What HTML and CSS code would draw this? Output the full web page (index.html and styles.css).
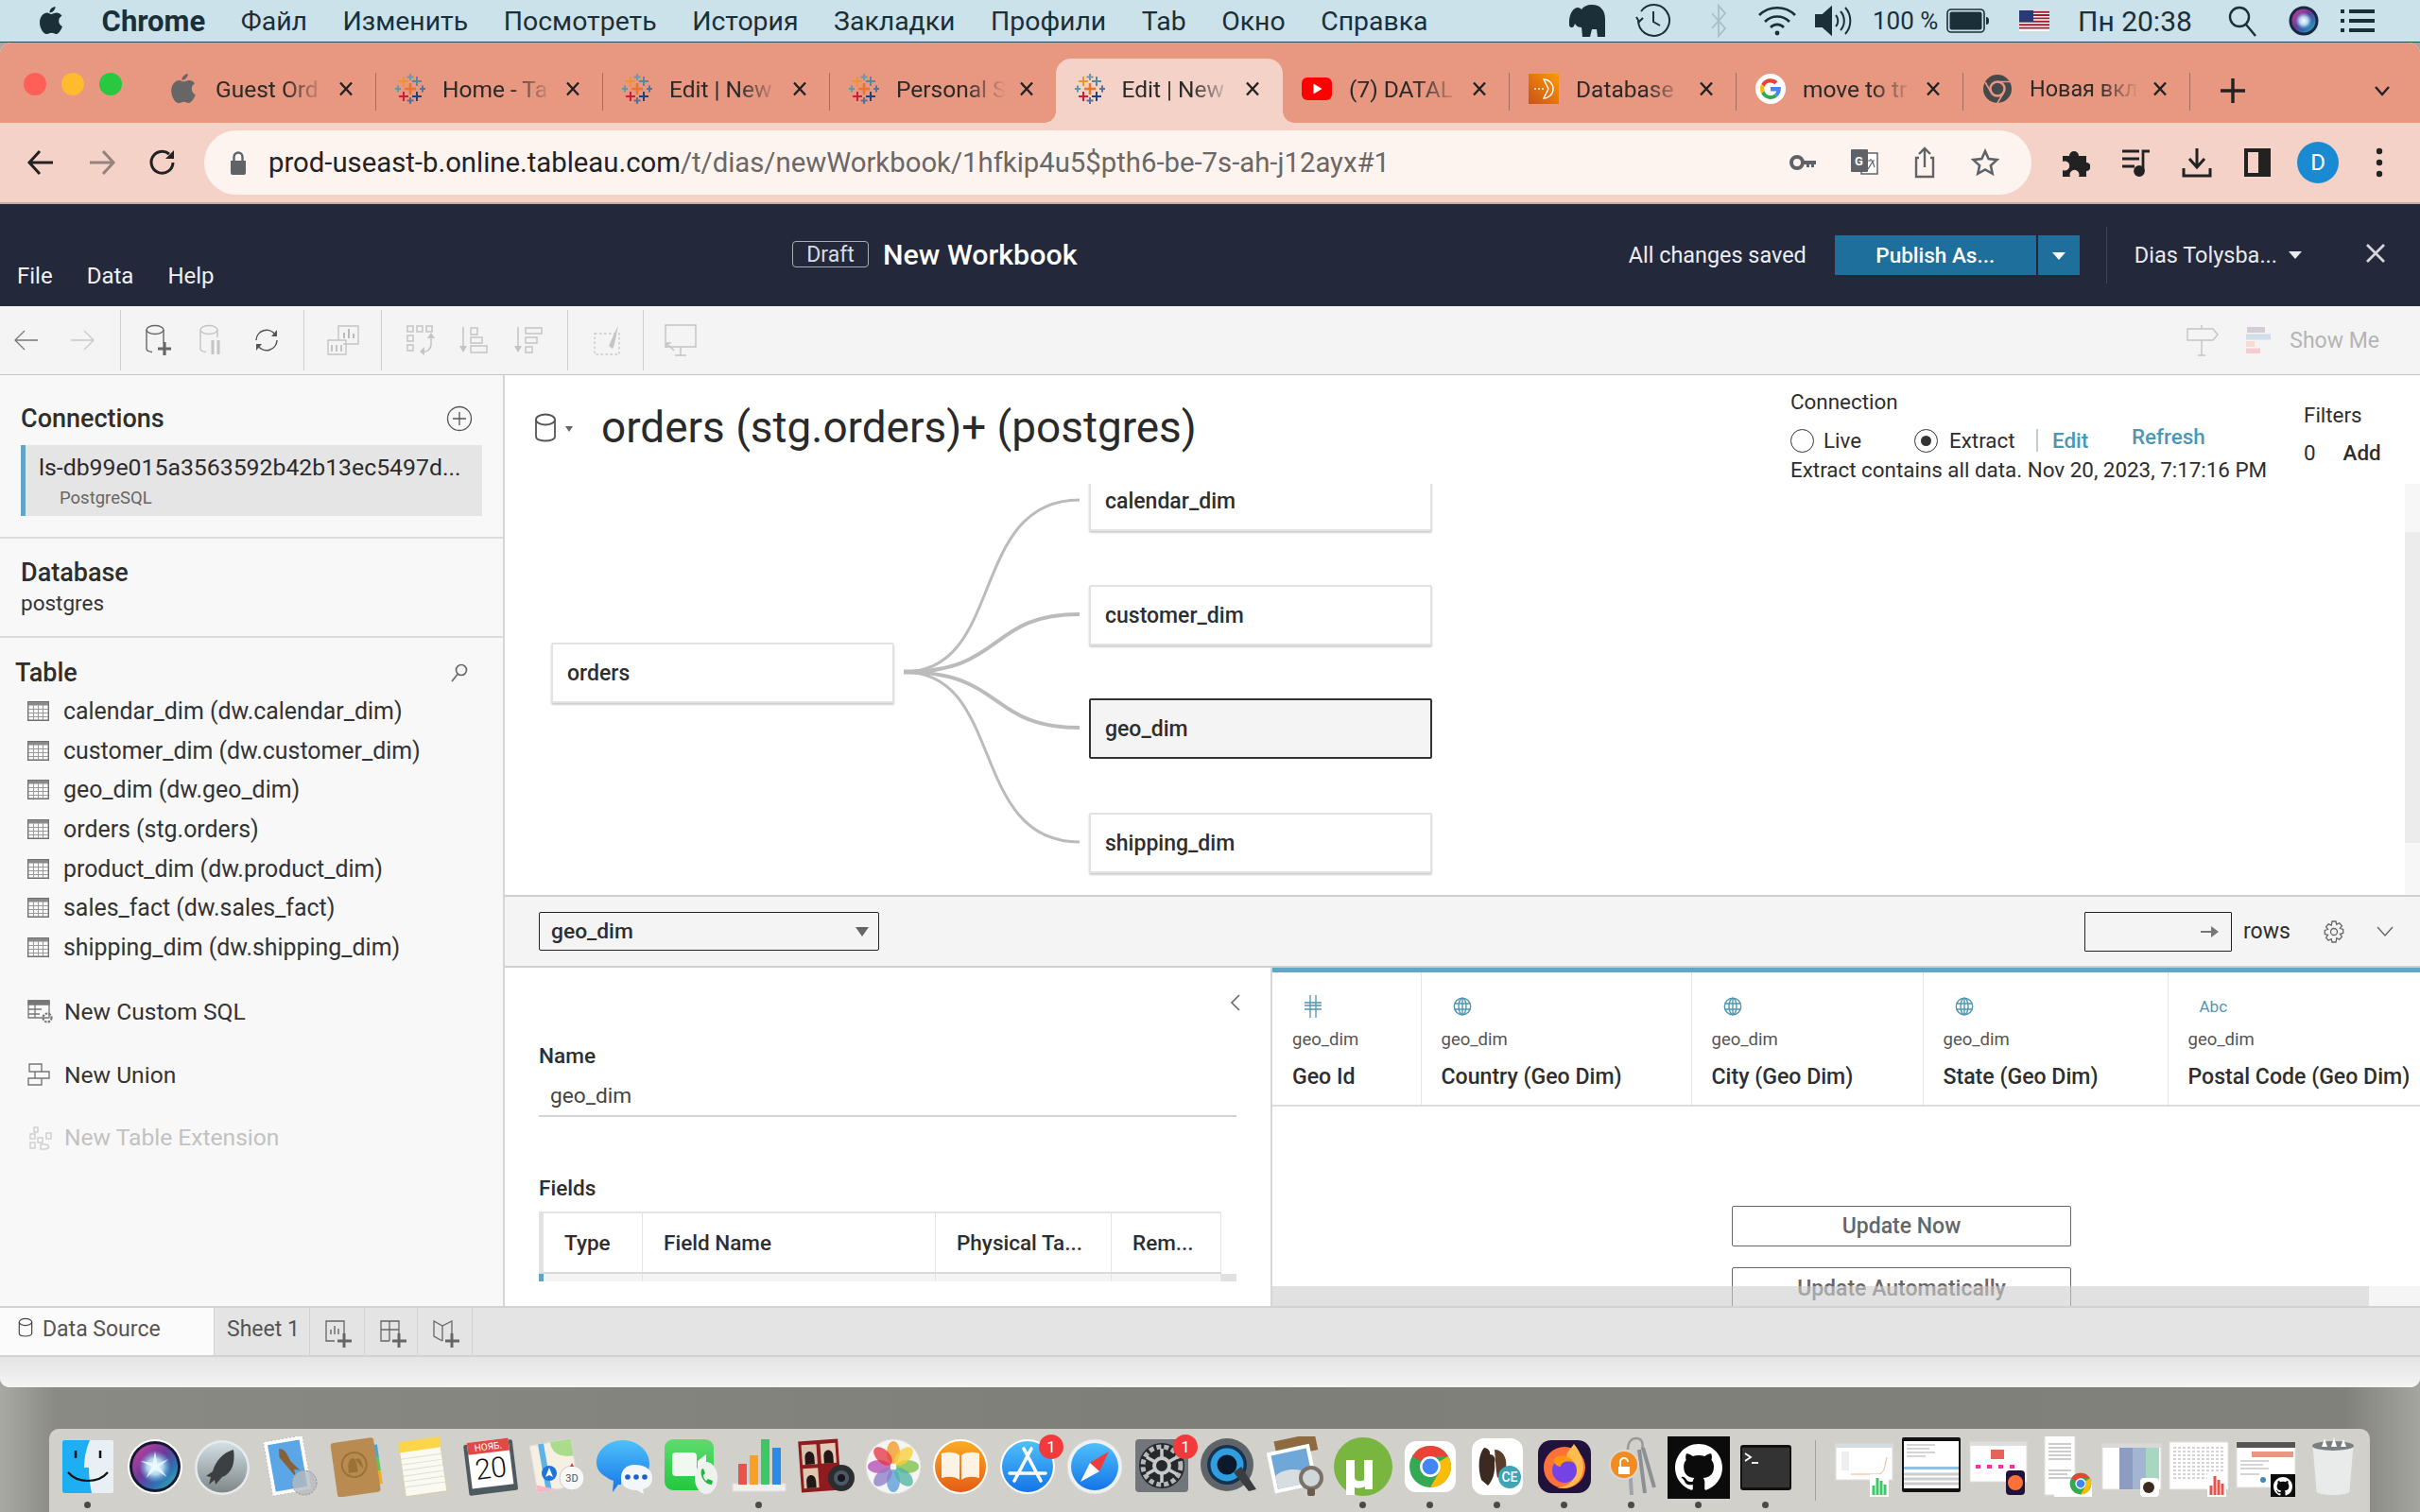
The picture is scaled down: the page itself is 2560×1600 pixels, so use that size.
FILE: index.html
```html
<!DOCTYPE html>
<html lang="ru">
<head>
<meta charset="utf-8">
<title>Tableau – New Workbook</title>
<link rel="stylesheet" href="styles.css">
</head>
<body>
<svg class="defs" width="0" height="0">
  <defs>
    <symbol id="tb" viewBox="0 0 32 32">
      <g fill="none" stroke-width="2">
        <path d="M16 10v12M10 16h12" stroke="#e8762d" stroke-width="2.6"/>
        <path d="M9 3v10M4 8h10" stroke="#e8962d"/>
        <path d="M23 3v10M18 8h10" stroke="#5b879b"/>
        <path d="M16 0v7M12.500 3.500h7" stroke="#7099a6"/>
        <path d="M3 12.500v7M0 16h6" stroke="#5b9aa8"/>
        <path d="M29 12.500v7M26 16h6" stroke="#5b6f9b"/>
        <path d="M9 19v10M4 24h10" stroke="#c72037"/>
        <path d="M23 19v10M18 24h10" stroke="#1f447b"/>
        <path d="M16 25v7M12.500 28.500h7" stroke="#5b6f9b"/>
      </g>
    </symbol>
    <symbol id="tx" viewBox="0 0 16 16">
      <path d="M2 1.500l12 13M14 1.500l-12 13" fill="none" stroke="#222" stroke-width="2.400"/>
    </symbol>
    <symbol id="apple" viewBox="0 0 24 30">
      <path d="M16.500 0c.3 3.200-2.900 6.600-6 6.300C10.200 3.200 13.400.3 16.500 0zM12 8c1.500 0 3.300-1.500 5.800-1.500 2 0 4.300 1.100 5.600 3.200-4.700 2.700-3.900 9.300 .6 11.200-1.300 3.300-3.900 8.100-6.700 8.100-1.900 0-2.600-1.200-4.700-1.200-2.200 0-3 1.200-4.700 1.200C4.500 29.900 0 23 0 17 0 10.300 4.300 6.500 7.800 6.500c1.900 0 3.200 1.500 4.200 1.500z"/>
    </symbol>
    <symbol id="grid" viewBox="0 0 23 21">
      <path d="M.7.7h21.600v19.600H.7z" fill="none" stroke="#707070" stroke-width="1.400"/>
      <path d="M1 1h21v3.500H1z" fill="#8a8a8a"/>
      <path d="M1 8.500h21M1 12.500h21M1 16.500h21M6.500 4v16M11.500 4v16M16.500 4v16" stroke="#9a9a9a" stroke-width="1"/>
    </symbol>
    <symbol id="globe" viewBox="0 0 20 20">
      <g fill="none" stroke="#4f96b0" stroke-width="1.400">
        <circle cx="10" cy="10" r="8.700"/>
        <ellipse cx="10" cy="10" rx="4" ry="8.700"/>
        <path d="M10 1v18M1.500 7h17M1.500 13h17"/>
      </g>
    </symbol>
    <symbol id="cyl" viewBox="0 0 24 32">
      <g fill="none" stroke="currentColor" stroke-width="1.800">
        <path d="M2 7v18c0 6 20 6 20 0V7"/>
        <ellipse cx="12" cy="7" rx="10" ry="5.500"/>
      </g>
    </symbol>
    <symbol id="gchrome" viewBox="0 0 64 64">
      <circle cx="32" cy="32" r="26" fill="#34a853"/>
      <path d="M32 6a26 26 0 0 1 22.500 13H32a13 13 0 0 0-11.300 6.500L9.500 19A26 26 0 0 1 32 6z" fill="#ea4335"/>
      <path d="M54.500 19A26 26 0 0 1 32 58l11.300-19.500A13 13 0 0 0 43.300 25.500z" fill="#fbbc05"/>
      <circle cx="32" cy="32" r="13" fill="#fff"/>
      <circle cx="32" cy="32" r="10" fill="#4285f4"/>
    </symbol>
    <symbol id="gh" viewBox="0 0 16 16">
      <path fill="#fff" d="M8 0C3.580 0 0 3.580 0 8c0 3.540 2.290 6.530 5.470 7.590.4.070.55-.17.55-.38 0-.19-.01-.82-.01-1.490-2.010.37-2.530-.49-2.690-.94-.09-.23-.48-.94-.82-1.130-.28-.15-.68-.52-.01-.53.630-.01 1.080.58 1.230.82.720 1.210 1.870.87 2.330.66.070-.52.280-.87.510-1.070-1.780-.2-3.640-.89-3.640-3.950 0-.87.310-1.590.820-2.150-.08-.2-.36-1.020.08-2.120 0 0 .67-.21 2.200.82.640-.18 1.320-.27 2-.27s1.360.09 2 .27c1.530-1.040 2.200-.82 2.200-.82.440 1.100.16 1.920.08 2.120.51.560.82 1.270.82 2.150 0 3.070-1.870 3.750-3.650 3.950.29.250.54.730.54 1.480 0 1.070-.01 1.930-.01 2.200 0 .21.150.46.550.38A8 8 0 0 0 16 8c0-4.420-3.580-8-8-8z"/>
    </symbol>
    <linearGradient id="siriG" x1="0" y1="0" x2="1" y2="1">
      <stop offset="0" stop-color="#d0409f"/><stop offset=".45" stop-color="#6a3a9a"/><stop offset=".7" stop-color="#2f6fb0"/><stop offset="1" stop-color="#38c0b8"/>
    </linearGradient>
    <radialGradient id="siriS">
      <stop offset="0" stop-color="#fff"/><stop offset=".5" stop-color="#bfeefa" stop-opacity=".85"/><stop offset="1" stop-color="#6fc9ec" stop-opacity="0"/>
    </radialGradient>
    <linearGradient id="greenG" x1="0" y1="0" x2="0" y2="1">
      <stop offset="0" stop-color="#5ddc6f"/><stop offset="1" stop-color="#23c83d"/>
    </linearGradient>
    <linearGradient id="blueG" x1="0" y1="0" x2="0" y2="1">
      <stop offset="0" stop-color="#4fc0fb"/><stop offset="1" stop-color="#1475e8"/>
    </linearGradient>
    <linearGradient id="orG" x1="0" y1="0" x2="0" y2="1">
      <stop offset="0" stop-color="#fbab25"/><stop offset="1" stop-color="#e55c14"/>
    </linearGradient>
    <linearGradient id="rkG" x1="0" y1="0" x2="0" y2="1">
      <stop offset="0" stop-color="#d2dfe4"/><stop offset="1" stop-color="#7f8688"/>
    </linearGradient>
    <linearGradient id="awsG" x1="0" y1="1" x2="1" y2="0">
      <stop offset="0" stop-color="#c8511b"/><stop offset="1" stop-color="#f90"/>
    </linearGradient>
  </defs>
</svg>

<header class="menubar">
  <div class="mb-left">
    <svg class="mb-apple" width="24" height="30"><use href="#apple"/></svg>
    <span class="mb-app">Chrome</span>
    <span>Файл</span><span>Изменить</span><span>Посмотреть</span><span>История</span><span>Закладки</span><span>Профили</span><span>Tab</span><span>Окно</span><span>Справка</span>
  </div>
  <div class="mb-right">
    <svg class="st st-el" width="40" height="36" viewBox="0 0 40 36"><path fill="#1a2f38" d="M0 17C1 9 5 4 9 4c2 0 3 1 4 2 2-3 6-5 11-5 9 0 14 6 14 15v19h-8l-1-8h-5l-2 8h-8l-1-10c-3 0-5-1-7-4-1 3-2 4-3 4-3 0-4-3-4-8z"/></svg>
    <svg class="st st-clock" width="38" height="38" viewBox="0 0 38 38" fill="none" stroke="#1a2f38" stroke-width="2"><path d="M6 9a16.500 16.500 0 1 1-3 10"/><path d="M1 15l3 5 4-4" stroke-width="2"/><path d="M19 9v11l7 4"/></svg>
    <svg class="st st-bt" width="18" height="36" viewBox="0 0 18 36" fill="none" stroke="#a9bec6" stroke-width="1.800"><path d="M2 10l14 16-7 8V2l7 8L2 26"/></svg>
    <svg class="st st-wifi" width="42" height="34" viewBox="0 0 42 34" fill="none" stroke="#1a2f38" stroke-width="2.600"><path d="M2 11a27 27 0 0 1 38 0M8 18a18 18 0 0 1 26 0M14 24a9.500 9.500 0 0 1 14 0"/><circle cx="21" cy="30" r="2.400" fill="#1a2f38" stroke="none"/></svg>
    <svg class="st st-vol" width="42" height="34" viewBox="0 0 42 34" fill="none" stroke="#1a2f38" stroke-width="2"><path d="M1 11h7l9-8v28l-9-8H1z" fill="#1a2f38"/><path d="M22 11a9 9 0 0 1 0 12M27 7a15 15 0 0 1 0 20M32 3a21 21 0 0 1 0 28"/></svg>
    <span class="st-pct">100 %</span>
    <svg class="st st-bat" width="46" height="26" viewBox="0 0 46 26"><rect x="1" y="1" width="39" height="24" rx="4" fill="none" stroke="#1a2f38" stroke-width="1.600"/><rect x="3.500" y="3.500" width="34" height="19" rx="2" fill="#1a2f38"/><path d="M42 9c2 0 3 1 3 4s-1 4-3 4z" fill="#1a2f38"/></svg>
    <svg class="st st-flag" width="32" height="22" viewBox="0 0 32 22"><rect width="32" height="22" fill="#fff"/><path d="M0 1.700h32M0 5h32M0 8.400h32M0 11.800h32M0 15.200h32M0 18.600h32" stroke="#a3182e" stroke-width="1.900"/><rect width="15" height="12" fill="#2b3a74"/></svg>
    <span class="st-time">Пн 20:38</span>
    <svg class="st st-search" width="32" height="34" viewBox="0 0 32 34" fill="none" stroke="#1a2f38" stroke-width="2.400"><circle cx="13" cy="13" r="10"/><path d="M20 21l10 12"/></svg>
    <svg class="st st-siri" width="32" height="32" viewBox="0 0 32 32"><circle cx="16" cy="16" r="15.500" fill="#1b2740"/><circle cx="16" cy="16" r="12.500" fill="url(#siriG)"/><circle cx="16" cy="16" r="9" fill="url(#siriS)"/></svg>
    <svg class="st st-list" width="36" height="26" viewBox="0 0 36 26" fill="#1a2f38"><path d="M0 1h4v4H0zM9 1h27v4H9zM0 11h4v4H0zM9 11h27v4H9zM0 21h4v4H0zM9 21h27v4H9z"/></svg>
  </div>
</header>

<main class="window">
  <div class="tabstrip">
    <div class="lights"><i class="l-r"></i><i class="l-y"></i><i class="l-g"></i></div>
    <div class="tab">
      <svg class="fav fav-gray" width="32" height="32"><use href="#apple"/></svg>
      <span class="t-title">Guest Ord</span><svg class="t-x" width="16" height="16"><use href="#tx"/></svg>
    </div><i class="t-sep"></i>
    <div class="tab">
      <svg class="fav" width="32" height="32"><use href="#tb"/></svg>
      <span class="t-title">Home - Ta</span><svg class="t-x" width="16" height="16"><use href="#tx"/></svg>
    </div><i class="t-sep"></i>
    <div class="tab">
      <svg class="fav" width="32" height="32"><use href="#tb"/></svg>
      <span class="t-title">Edit | New</span><svg class="t-x" width="16" height="16"><use href="#tx"/></svg>
    </div><i class="t-sep"></i>
    <div class="tab tab-pre">
      <svg class="fav" width="32" height="32"><use href="#tb"/></svg>
      <span class="t-title">Personal S</span><svg class="t-x" width="16" height="16"><use href="#tx"/></svg>
    </div>
    <div class="tab tab-active">
      <svg class="fav" width="32" height="32"><use href="#tb"/></svg>
      <span class="t-title">Edit | New</span><svg class="t-x" width="16" height="16"><use href="#tx"/></svg>
    </div>
    <div class="tab">
      <svg class="fav" width="32" height="32" viewBox="0 0 32 32"><rect y="4" width="32" height="24" rx="6" fill="#f00"/><path d="M12.500 10.500v11l9-5.500z" fill="#fff"/></svg>
      <span class="t-title">(7) DATAL</span><svg class="t-x" width="16" height="16"><use href="#tx"/></svg>
    </div><i class="t-sep"></i>
    <div class="tab">
      <svg class="fav" width="32" height="32" viewBox="0 0 32 32"><rect width="32" height="32" fill="url(#awsG)"/><g fill="none" stroke="#fff" stroke-width="1.400"><path d="M16 6a10 10 0 0 1 0 20l5-10z"/><path d="M6 16h10" stroke-dasharray="2 2"/></g></svg>
      <span class="t-title">Database</span><svg class="t-x" width="16" height="16"><use href="#tx"/></svg>
    </div><i class="t-sep"></i>
    <div class="tab">
      <svg class="fav" width="32" height="32" viewBox="0 0 32 32"><circle cx="16" cy="16" r="16" fill="#fff"/><path d="M16 9.500a6.500 6.500 0 0 1 4.400 1.700l3-3A11 11 0 0 0 6.200 11l3.400 2.700A6.500 6.500 0 0 1 16 9.500z" fill="#ea4335"/><path d="M6.200 11a11 11 0 0 0 0 10l3.400-2.700a6.500 6.500 0 0 1 0-4.600z" fill="#fbbc05"/><path d="M6.200 21A11 11 0 0 0 23.400 24l-3.200-2.500a6.500 6.500 0 0 1-10.600-3.200z" fill="#34a853"/><path d="M27 14H16v4.500h6.300a5.500 5.500 0 0 1-2.100 3L23.400 24C25.700 22 27 18.500 27 14z" fill="#4285f4"/></svg>
      <span class="t-title">move to tr</span><svg class="t-x" width="16" height="16"><use href="#tx"/></svg>
    </div><i class="t-sep"></i>
    <div class="tab">
      <svg class="fav" width="32" height="32" viewBox="0 0 32 32"><circle cx="16" cy="16" r="15" fill="#45494c"/><circle cx="16" cy="16" r="7.500" fill="#45494c" stroke="#e89780" stroke-width="2.500"/><path d="M16 8.500h13M9.500 20L3 9M22.500 20L16 31" stroke="#e89780" stroke-width="1.600"/></svg>
      <span class="t-title t-ru">Новая вкл</span><svg class="t-x" width="16" height="16"><use href="#tx"/></svg>
    </div><i class="t-sep"></i>
    <svg class="t-plus" width="26" height="28" viewBox="0 0 26 28" fill="none" stroke="#222" stroke-width="3.400"><path d="M13 1v26M0 14h26"/></svg>
    <svg class="t-more" width="18" height="12" viewBox="0 0 18 12" fill="none" stroke="#222" stroke-width="2.400"><path d="M2 2l7 8 7-8"/></svg>
  </div>

  <div class="chromebar">
    <svg class="cb-nav" width="30" height="30" viewBox="0 0 30 30" fill="none" stroke="#222" stroke-width="3"><path d="M28 15H3M14 3L3 15l11 12"/></svg>
    <svg class="cb-nav cb-fwd" width="30" height="30" viewBox="0 0 30 30" fill="none" stroke="#96827d" stroke-width="3"><path d="M2 15h25M16 3l11 12-11 12"/></svg>
    <svg class="cb-nav cb-rel" width="30" height="30" viewBox="0 0 30 30" fill="none" stroke="#222" stroke-width="3"><path d="M26 15a11.500 11.500 0 1 1-4-9"/><path d="M27 2v9h-9z" fill="#222" stroke="none"/></svg>
    <div class="omnibox">
      <svg class="ob-lock" width="18" height="26" viewBox="0 0 18 26"><path d="M1 11h16v13a2 2 0 0 1-2 2H3a2 2 0 0 1-2-2z" fill="#5f6368"/><path d="M4.500 11V7a4.500 4.500 0 0 1 9 0v4" fill="none" stroke="#5f6368" stroke-width="2.400"/></svg>
      <div class="ob-url"><b>prod-useast-b.online.tableau.com</b>/t/dias/newWorkbook/1hfkip4u5$pth6-be-7s-ah-j12ayx#1</div>
      <svg class="ob-ic" width="30" height="30" viewBox="0 0 30 30"><circle cx="8" cy="15" r="6" fill="none" stroke="#5f6368" stroke-width="4"/><path d="M13 13h15v4h-2v3h-3v-3h-2v3h-3v-3h-5z" fill="#5f6368"/></svg>
      <svg class="ob-ic" width="30" height="32" viewBox="0 0 30 32"><rect x="12" y="6" width="17" height="22" fill="#fff" stroke="#5f6368" stroke-width="1.500"/><rect x="1" y="2" width="18" height="24" rx="1" fill="#5f6368"/><text class="ob-g" x="5" y="19">G</text><path d="M18 14h8M22 12v2M19 23l5-8 2 6" fill="none" stroke="#5f6368" stroke-width="1.200"/></svg>
      <svg class="ob-ic" width="30" height="34" viewBox="0 0 30 34" fill="none" stroke="#5f6368" stroke-width="2.400"><path d="M9 12H6v20h18V12h-3M15 22V3M9 8l6-6 6 6"/></svg>
      <svg class="ob-ic" width="30" height="30" viewBox="0 0 30 30" fill="none" stroke="#5f6368" stroke-width="2.600"><path d="M15 3l3.600 8.100 8.900 1-6.600 6 1.800 8.700L15 22.400l-7.700 4.400L9.100 18.100l-6.600-6 8.900-1z"/></svg>
    </div>
    <svg class="cb-r cb-r1" width="30" height="32" viewBox="0 0 30 32" fill="#222"><path d="M1 9h7a5 5 0 1 1 10 0h8v7a4.500 4.500 0 1 1 0 9v6H18a5 5 0 1 0-9 0H1v-7a5 5 0 1 0 0-9z"/></svg>
    <svg class="cb-r cb-r2" width="32" height="30" viewBox="0 0 32 30" fill="none" stroke="#222" stroke-width="2.800"><path d="M1 3h18M1 11h18M1 19h13M23 24V3h7"/><circle cx="19" cy="24" r="4.500" fill="#222"/></svg>
    <svg class="cb-r cb-r3" width="32" height="32" viewBox="0 0 32 32" fill="none" stroke="#222" stroke-width="3"><path d="M16 1v20M8 12l8 9 8-9" /><path d="M2 22v8h28v-8"/></svg>
    <svg class="cb-r cb-r4" width="28" height="30" viewBox="0 0 28 30"><path d="M0 0h28v30H0z" fill="#222"/><path d="M4 4h11v22H4z" fill="#f5d2c8"/></svg>
    <span class="avatar">D</span>
    <svg class="cb-r cb-dots" width="8" height="32" viewBox="0 0 8 32" fill="#222"><circle cx="4" cy="4" r="3.200"/><circle cx="4" cy="16" r="3.200"/><circle cx="4" cy="28" r="3.200"/></svg>
  </div>

  <section class="tb-head">
    <nav class="tb-menu"><span>File</span><span>Data</span><span>Help</span></nav>
    <div class="tb-title"><span class="draft">Draft</span><span class="wbname">New Workbook</span></div>
    <div class="tb-right">
      <span class="saved">All changes saved</span>
      <div class="publish"><span class="pub-main">Publish As...</span><span class="pub-caret"></span></div>
      <i class="tb-vsep"></i>
      <span class="user">Dias Tolysba...</span><i class="user-caret"></i>
      <svg class="tb-close" width="22" height="22" viewBox="0 0 22 22" stroke="#d5d7dc" stroke-width="2.800"><path d="M2 2l18 18M20 2L2 20"/></svg>
    </div>
  </section>

  <section class="tb-tools">
    <svg class="ti ti-a" width="30" height="30" viewBox="0 0 30 30" fill="none" stroke="#777" stroke-width="1.300"><path d="M27 15H3M13 5L3 15l10 10"/></svg>
    <svg class="ti ti-b" width="30" height="30" viewBox="0 0 30 30" fill="none" stroke="#c8c8c8" stroke-width="1.300"><path d="M3 15h24M17 5l10 10-10 10"/></svg>
    <i class="ti-sep sep1"></i>
    <svg class="ti ti-c" width="28" height="34" viewBox="0 0 28 34" fill="none" stroke="#666" stroke-width="1.400"><path d="M2 6v20c0 2 2 3 6 3.500M20 6v14"/><ellipse cx="11" cy="6" rx="9" ry="4.500"/><path d="M21 19v14M14 26h14" stroke-width="3.200"/></svg>
    <svg class="ti ti-d" width="26" height="34" viewBox="0 0 26 34" fill="none" stroke="#c4c4c4" stroke-width="1.400"><path d="M2 6v20c0 2 2 3 6 3.500M20 6v8"/><ellipse cx="11" cy="6" rx="9" ry="4.500"/><path d="M15 17v15M21 17v15" stroke-width="3"/></svg>
    <svg class="ti ti-e" width="30" height="30" viewBox="0 0 30 30" fill="none" stroke="#555" stroke-width="1.500"><path d="M4 15a11 11 0 0 1 20-6M26 15a11 11 0 0 1-20 6"/><path d="M26 4v7h-6z M4 26v-7h6z" fill="#555" stroke="none"/></svg>
    <i class="ti-sep sep2"></i>
    <svg class="ti ti-f" width="34" height="32" viewBox="0 0 34 32" fill="none" stroke="#c4c4c4" stroke-width="1.400"><path d="M12 16V1h21v19H17"/><path d="M18 14V8M23 14V4M28 14V9" stroke="#bbb" stroke-width="2"/><path d="M1 16h19v15H1z"/><path d="M5 21v7M10 21v7M15 21v7" stroke-width="2"/></svg>
    <i class="ti-sep sep3"></i>
    <svg class="ti ti-g" width="30" height="32" viewBox="0 0 30 32" fill="none" stroke="#c4c4c4" stroke-width="1.500"><path d="M1 1h6v6H1zM11 1h6v6h-6zM21 1h6v6h-6zM1 11h6v6H1zM1 21h6v6H1z"/><path d="M26 11v9a8 8 0 0 1-10 8"/><path d="M22 14l4-6 4 6zM19 23l-5 5 5 4z" fill="#c4c4c4" stroke="none"/></svg>
    <svg class="ti ti-h" width="30" height="30" viewBox="0 0 30 30" fill="none" stroke="#c4c4c4" stroke-width="1.500"><path d="M4 1v26"/><path d="M0 21l4 7 4-7z" fill="#c4c4c4" stroke="none"/><path d="M12 2h7v7h-7zM12 12h12v6H12zM12 21h17v7H12z"/></svg>
    <svg class="ti ti-i" width="30" height="30" viewBox="0 0 30 30" fill="none" stroke="#c4c4c4" stroke-width="1.500"><path d="M4 1v26"/><path d="M0 21l4 7 4-7z" fill="#c4c4c4" stroke="none"/><path d="M12 2h17v6H12zM12 12h12v6H12zM12 22h7v6h-7z"/></svg>
    <i class="ti-sep sep4"></i>
    <svg class="ti ti-j" width="28" height="32" viewBox="0 0 28 32" fill="none" stroke="#c8c8c8" stroke-width="1.400"><path d="M1 9h26v22H1z" stroke-dasharray="2.500 2.500"/><path d="M26 0L16 22l4 3c2-3 3-10 6-25z" fill="#c4c4c4" stroke="none"/></svg>
    <i class="ti-sep sep5"></i>
    <svg class="ti ti-k" width="34" height="34" viewBox="0 0 34 34" fill="none" stroke="#c4c4c4" stroke-width="1.500"><path d="M1 1h32v23H1zM17 24v9M11 33h12"/><path d="M2 20l8 8M2 20h5M2 20v5" stroke-width="1.500"/></svg>
    <div class="tools-right">
      <svg class="tr-sign" width="34" height="34" viewBox="0 0 34 34" fill="none" stroke="#c4c4c4" stroke-width="1.400"><path d="M16 1v4M16 17v16M12 33h8M1 5h27l5 6-5 6H1z"/></svg>
      <svg class="tr-show" width="26" height="28" viewBox="0 0 26 28"><rect x="1" y="0" width="19" height="6" fill="#d3cdd8"/><rect y="7.500" width="26" height="6" fill="#d2dde9"/><rect y="15" width="9" height="6" fill="#f6dbd2"/><rect y="22.500" width="15" height="5.500" fill="#f5ccd0"/></svg>
      <span class="showme">Show Me</span>
    </div>
  </section>

  <div class="workspace">
    <aside class="sidebar">
      <div class="sb-conn">
        <div class="sb-hd"><span class="sb-h">Connections</span>
          <svg width="28" height="28" viewBox="0 0 28 28" fill="none" stroke="#555" stroke-width="1.300"><circle cx="14" cy="14" r="12.500"/><path d="M14 7v14M7 14h14"/></svg>
        </div>
        <div class="conn-card"><span class="conn-name">ls-db99e015a3563592b42b13ec5497d...</span><span class="conn-type">PostgreSQL</span></div>
      </div>
      <div class="sb-db"><span class="sb-h">Database</span><span class="sb-val">postgres</span></div>
      <div class="sb-tables">
        <div class="tbl-hd"><span class="sb-h">Table</span>
          <svg width="18" height="20" viewBox="0 0 18 20" fill="none" stroke="#666" stroke-width="1.600"><circle cx="11" cy="7" r="5.500"/><path d="M7 11.500L1 19"/></svg>
        </div>
        <ul class="tbl-list">
          <li><svg width="23" height="21"><use href="#grid"/></svg>calendar_dim (dw.calendar_dim)</li>
          <li><svg width="23" height="21"><use href="#grid"/></svg>customer_dim (dw.customer_dim)</li>
          <li><svg width="23" height="21"><use href="#grid"/></svg>geo_dim (dw.geo_dim)</li>
          <li><svg width="23" height="21"><use href="#grid"/></svg>orders (stg.orders)</li>
          <li><svg width="23" height="21"><use href="#grid"/></svg>product_dim (dw.product_dim)</li>
          <li><svg width="23" height="21"><use href="#grid"/></svg>sales_fact (dw.sales_fact)</li>
          <li><svg width="23" height="21"><use href="#grid"/></svg>shipping_dim (dw.shipping_dim)</li>
        </ul>
        <div class="tbl-act">
          <svg width="28" height="26" viewBox="0 0 28 26" fill="none" stroke="#777" stroke-width="1.300"><path d="M1 1h22v18H1z"/><path d="M1 1h22v4H1z" fill="#777"/><path d="M1 10h14M1 15h12M8 5v14"/><circle cx="21" cy="19" r="4.500" stroke-width="2.200" stroke-dasharray="2.500 1.200"/></svg>
          <span>New Custom SQL</span>
        </div>
        <div class="tbl-act">
          <svg width="28" height="24" viewBox="0 0 28 24" fill="none" stroke="#777" stroke-width="1.400"><path d="M2 1h13v8H2zM8 9h15v7H8zM1 16h14v7H1z"/></svg>
          <span>New Union</span>
        </div>
        <div class="tbl-act dis">
          <svg width="28" height="26" viewBox="0 0 28 26" fill="none" stroke="#cfcfcf" stroke-width="1.500"><path d="M7 2h4v5H7zM3 9h5v5H3zM11 13h5v5h-5zM3 18h5v6H3zM14 20h4c6 0 6 5 0 5h-4zM20 8h5v6h-5z"/></svg>
          <span>New Table Extension</span>
        </div>
      </div>
    </aside>

    <div class="main">
      <div class="ds-head">
        <svg class="ds-cyl" width="24" height="32"><use href="#cyl"/></svg>
        <i class="ds-caret"></i>
        <h1 class="ds-title">orders (stg.orders)+ (postgres)</h1>
        <div class="ds-conn">
          <div class="dc-l">Connection</div>
          <div class="dc-row">
            <i class="radio"></i><span class="dc-live">Live</span>
            <i class="radio on"></i><span class="dc-ex">Extract</span>
            <i class="dc-sep"></i><span class="lnk">Edit</span><span class="lnk lnk-up">Refresh</span>
          </div>
          <div class="dc-l">Extract contains all data. Nov 20, 2023, 7:17:16 PM</div>
        </div>
        <div class="ds-filt">
          <div class="df-l">Filters</div>
          <div class="df-r"><span>0</span><b>Add</b></div>
        </div>
      </div>

      <div class="canvas">
        <svg class="links" width="620" height="435" viewBox="0 0 620 435" fill="none" stroke="#bbb">
          <path stroke-width="3" d="M422 199C530 199 490 17 608 17"/>
          <path stroke-width="4" d="M422 199C530 199 510 138 608 138"/>
          <path stroke-width="4" d="M422 199C530 199 510 258 608 258"/>
          <path stroke-width="3" d="M422 199C530 199 490 379 608 379"/>
          <path stroke-width="5" d="M422 199h30"/>
        </svg>
        <div class="node n-orders">orders</div>
        <div class="node n-cal">calendar_dim</div>
        <div class="node n-cust">customer_dim</div>
        <div class="node n-geo">geo_dim</div>
        <div class="node n-ship">shipping_dim</div>
        <div class="vscroll"></div>
      </div>

      <div class="gridbar">
        <div class="select"><span>geo_dim</span><i></i></div>
        <div class="gb-right">
          <div class="rowsinput"><svg width="20" height="14" viewBox="0 0 20 14" fill="#777"><path d="M0 6h12v2H0zM11 1l8 6-8 6z"/></svg></div>
          <span class="rowslbl">rows</span>
          <svg class="gb-gear" width="22" height="24" viewBox="0 0 22 24" fill="none" stroke="#666" stroke-width="1.300"><circle cx="11" cy="12" r="3.500"/><path d="M9 1h4l.8 3.200 3-1.500 2.600 3-2 2.700 3.300 1v4l-3.300 1 2 2.700-2.600 3-3-1.500L13 23H9l-.8-3.400-3 1.500-2.600-3 2-2.700-3.300-1v-4l3.300-1-2-2.700 2.600-3 3 1.500z"/></svg>
          <svg class="gb-chev" width="18" height="12" viewBox="0 0 18 12" fill="none" stroke="#666" stroke-width="1.400"><path d="M1 1l8 9 8-9"/></svg>
        </div>
      </div>

      <div class="lower">
        <div class="meta">
          <svg class="meta-back" width="12" height="18" viewBox="0 0 12 18" fill="none" stroke="#666" stroke-width="1.600"><path d="M10 1L2 9l8 8"/></svg>
          <div class="m-label">Name</div>
          <div class="m-name">geo_dim</div>
          <div class="m-label m-fields">Fields</div>
          <div class="ft-wrap">
            <div class="ftable">
              <div class="fcol f1"><span>Type</span></div>
              <div class="fcol f2"><span>Field Name</span></div>
              <div class="fcol f3"><span>Physical Ta...</span></div>
              <div class="fcol f4"><span>Rem...</span></div>
            </div>
            <div class="frow"><i class="fr-mark"></i><i class="fr1"></i><i class="fr2"></i><i class="fr3"></i><i class="fr4"></i><i class="fr-bar"></i></div>
          </div>
        </div>
        <div class="preview">
          <div class="cols">
            <div class="col c1">
              <svg class="cic" width="20" height="26" viewBox="0 0 20 26" stroke="#4f96b0" stroke-width="1.300"><path d="M7 1v24M13 1v24M1 9h18M1 12h18M1 16h18"/></svg>
              <span class="csrc">geo_dim</span><span class="cname">Geo Id</span>
            </div>
            <div class="col c2">
              <svg class="cic" width="20" height="24"><use href="#globe"/></svg>
              <span class="csrc">geo_dim</span><span class="cname">Country (Geo Dim)</span>
            </div>
            <div class="col c3">
              <svg class="cic" width="20" height="24"><use href="#globe"/></svg>
              <span class="csrc">geo_dim</span><span class="cname">City (Geo Dim)</span>
            </div>
            <div class="col c4">
              <svg class="cic" width="20" height="24"><use href="#globe"/></svg>
              <span class="csrc">geo_dim</span><span class="cname">State (Geo Dim)</span>
            </div>
            <div class="col c5">
              <span class="cic cabc">Abc</span>
              <span class="csrc">geo_dim</span><span class="cname">Postal Code (Geo Dim)</span>
            </div>
          </div>
          <div class="upd">
            <div class="btn">Update Now</div>
            <div class="btn btn2">Update Automatically</div>
          </div>
          <div class="hscroll"></div>
        </div>
      </div>
    </div>
  </div>

  <div class="sheetbar">
    <div class="st-ds"><svg width="16" height="24" viewBox="0 0 24 32" ><use href="#cyl"/></svg><span>Data Source</span></div>
    <div class="st-sheet">Sheet 1</div>
    <div class="st-add a1"><svg width="28" height="30" viewBox="0 0 28 30" fill="none" stroke="#666" stroke-width="1.300"><path d="M10 22H1V1h19v13"/><path d="M6 15V10M10 15V6M14 15V9" stroke-width="1.400"/><path d="M20 14v15M13 22h15" stroke-width="3"/></svg></div>
    <div class="st-add a2"><svg width="28" height="30" viewBox="0 0 28 30" fill="none" stroke="#666" stroke-width="1.300"><path d="M10 22H1V1h19v13M1 10h19M10 1v21"/><path d="M20 14v15M13 22h15" stroke-width="3"/></svg></div>
    <div class="st-add a3"><svg width="28" height="30" viewBox="0 0 28 30" fill="none" stroke="#666" stroke-width="1.300"><path d="M10 22L1 17V1l9 5 10-5v13M10 6v16"/><path d="M20 14v15M13 22h15" stroke-width="3"/></svg></div>
  </div>
  <div class="winfoot"></div>
</main>

<footer class="dock">
  <div class="dk on"><svg width="64" height="64" viewBox="0 0 64 64"><rect x="5" y="4" width="54" height="56" rx="2" fill="#e9f0f5"/><path d="M7 4h27c-4 9-6 19-6 29h5c0 9 1 18 3 27H7a2 2 0 0 1-2-2V6a2 2 0 0 1 2-2z" fill="#1eaef3"/><path d="M19 15v8M45 15v8" stroke="#111" stroke-width="2.500"/><path d="M11 38c10 12 32 12 42 0" fill="none" stroke="#111" stroke-width="2.200"/></svg></div>
  <div class="dk"><svg width="64" height="64" viewBox="0 0 64 64"><circle cx="32" cy="32" r="29" fill="#fff"/><circle cx="32" cy="32" r="27" fill="#111a30"/><circle cx="32" cy="32" r="24" fill="url(#siriG)"/><circle cx="32" cy="32" r="17" fill="url(#siriS)"/><path d="M32 16l2.500 13 12-5-10 8 8 11-12-8-10 9 6-12-12-6 13 2z" fill="#eafaff" fill-opacity=".85"/></svg></div>
  <div class="dk"><svg width="64" height="64" viewBox="0 0 64 64"><circle cx="32" cy="33" r="29" fill="#e6ecee"/><circle cx="32" cy="33" r="26.500" fill="url(#rkG)"/><path d="M44 14C33 17 25 26 22 37l-7 5 5 1-2 8 6-5 1 5 7-8c11-4 14-16 12-29z" fill="#3c4043"/></svg></div>
  <div class="dk"><svg width="64" height="64" viewBox="0 0 64 64"><g transform="rotate(-10 30 30)"><rect x="9" y="2" width="42" height="58" fill="#fff" stroke="#bbb" stroke-dasharray="2 2"/><rect x="13" y="6" width="34" height="50" fill="#5aa6e6"/><path d="M24 12c6 0 8 7 10 15l8 11-6-2 1 9-8-14-6-10z" fill="#8a6136"/></g><circle cx="48" cy="49" r="13" fill="#b8bcbf" fill-opacity=".8" stroke="#8d9194" stroke-dasharray="2 1.500"/></svg></div>
  <div class="dk"><svg width="64" height="64" viewBox="0 0 64 64"><g transform="rotate(-8 30 32)"><rect x="52" y="12" width="5" height="14" fill="#3fa8d8"/><rect x="52" y="26" width="5" height="14" fill="#58c85a"/><rect x="52" y="40" width="5" height="14" fill="#f5ab20"/><rect x="8" y="4" width="46" height="58" rx="3" fill="#b98b50"/><circle cx="30" cy="30" r="13" fill="none" stroke="#9a7238" stroke-width="2"/><path d="M23 38c0-12 3-15 6-15s4 4 4 15zM32 25c3-3 7 0 7 11" fill="#9a7238"/></g></svg></div>
  <div class="dk"><svg width="64" height="64" viewBox="0 0 64 64"><g transform="rotate(-8 32 32)"><rect x="9" y="3" width="44" height="58" fill="#fbfaf0" stroke="#d6cfa8"/><rect x="9" y="3" width="44" height="11" fill="#fcd648"/><path d="M9 21h44M9 27h44M9 33h44M9 39h44M9 45h44M9 51h44" stroke="#ddd"/></g></svg></div>
  <div class="dk"><svg width="64" height="64" viewBox="0 0 64 64"><g transform="rotate(-7 32 32)"><rect x="6" y="6" width="52" height="54" rx="2" fill="#4e5a60"/><rect x="10" y="4" width="44" height="49" fill="#fff"/><rect x="10" y="4" width="44" height="13" fill="#e04a44"/><text class="dk-mon" x="32" y="14" text-anchor="middle">НОЯБ.</text><text class="dk-day" x="32" y="44" text-anchor="middle">20</text></g></svg></div>
  <div class="dk"><svg width="64" height="64" viewBox="0 0 64 64"><g transform="rotate(-10 28 30)"><rect x="6" y="6" width="44" height="50" fill="#f5f0e2" stroke="#ddd"/><path d="M28 6c0 12 8 18 22 18V6z" fill="#aadc8c"/><path d="M18 6v50" stroke="#5db2e8" stroke-width="6"/><path d="M6 48l20 8H6z" fill="#f6b6c6"/></g><circle cx="23" cy="39" r="8" fill="#1d75d9"/><path d="M23 33l-4 10 4-2 4 2z" fill="#fff"/><circle cx="47" cy="44" r="13" fill="#f7f7f7" stroke="#ccc"/><text class="dk-3d" x="47" y="48" text-anchor="middle">3D</text><path d="M47 28l-2 4h4z" fill="#e33"/></svg></div>
  <div class="dk"><svg width="64" height="64" viewBox="0 0 64 64"><path d="M30 4c15 0 28 11 28 25 0 7-3 10-6 13H34c-5 0-6 4-6 9l-3 0-6 8 1-12C10 43 2 37 2 28 2 14 15 4 30 4z" fill="url(#blueG)"/><path d="M42 30c10 0 19 4 19 14 0 8-6 11-10 12l1 5-7-4c-10 0-17-4-17-13 0-9 6-14 14-14z" fill="#f4f7fa"/><circle cx="35" cy="43" r="2.800" fill="#1d5fd1"/><circle cx="44" cy="43" r="2.800" fill="#1d5fd1"/><circle cx="53" cy="43" r="2.800" fill="#1d5fd1"/></svg></div>
  <div class="dk"><svg width="64" height="64" viewBox="0 0 64 64"><rect x="3" y="3" width="52" height="54" rx="9" fill="url(#greenG)"/><rect x="11" y="17" width="26" height="25" rx="4" fill="#f1f7f1"/><path d="M38 26l9-7v21l-9-7z" fill="#f1f7f1"/><ellipse cx="47" cy="44" rx="12" ry="17" fill="#eef2ee"/><path d="M42 35c-2 8 4 16 11 16l1-4-5-2-2 2c-2-1-3-4-3-6l2-2-2-5z" fill="#1dba3e"/></svg></div>
  <div class="dk on"><svg width="64" height="64" viewBox="0 0 64 64"><path d="M4 50h56v8H4z" fill="#f0f0ee" stroke="#ddd"/><rect x="10" y="29" width="9" height="22" fill="#e8524c"/><rect x="22" y="20" width="9" height="31" fill="#fba026"/><rect x="34" y="3" width="9" height="48" fill="#3dc865"/><rect x="46" y="12" width="9" height="39" fill="#2b8ce8"/></svg></div>
  <div class="dk"><svg width="64" height="64" viewBox="0 0 64 64"><g transform="rotate(-4 25 30)"><rect x="4" y="4" width="42" height="54" fill="#8e1c1f"/><rect x="7" y="8" width="16" height="21" fill="#d9c1ad"/><rect x="27" y="8" width="16" height="21" fill="#e2cbb6"/><rect x="7" y="33" width="16" height="21" fill="#dec6b1"/><path d="M10 22c0-9 10-9 10 0v7H10zM30 22c0-9 10-9 10 0v7H30zM10 47c0-9 10-9 10 0v7H10z" fill="#241816"/></g><circle cx="48" cy="44" r="14" fill="#2c2d30"/><circle cx="48" cy="44" r="8" fill="#4b5966"/><circle cx="48" cy="44" r="4" fill="#15181c"/></svg></div>
  <div class="dk"><svg width="64" height="64" viewBox="0 0 64 64"><circle cx="32" cy="32" r="29" fill="#f5f5f3" stroke="#ddd"/><g fill-opacity=".78"><ellipse cx="32" cy="17" rx="7" ry="12" fill="#f59a23"/><ellipse cx="32" cy="47" rx="7" ry="12" fill="#5b9bd9"/><ellipse cx="17" cy="32" rx="12" ry="7" fill="#b44fb5"/><ellipse cx="47" cy="32" rx="12" ry="7" fill="#7cc04a"/><ellipse cx="21" cy="21" rx="7" ry="12" transform="rotate(-45 21 21)" fill="#e63946"/><ellipse cx="43" cy="21" rx="7" ry="12" transform="rotate(45 43 21)" fill="#f8ce3a"/><ellipse cx="21" cy="43" rx="7" ry="12" transform="rotate(45 21 43)" fill="#8d7cc8"/><ellipse cx="43" cy="43" rx="7" ry="12" transform="rotate(-45 43 43)" fill="#4fb5a4"/></g></svg></div>
  <div class="dk"><svg width="64" height="64" viewBox="0 0 64 64"><circle cx="32" cy="32" r="29" fill="#fff"/><circle cx="32" cy="32" r="27" fill="url(#orG)"/><path d="M31 20c-5-4-12-4-19-2v26c7-2 14-2 19 2zM33 20c5-4 12-4 19-2v26c-7-2-14-2-19 2z" fill="#fdf3e4"/></svg></div>
  <div class="dk dk-badge"><svg width="64" height="64" viewBox="0 0 64 64"><circle cx="32" cy="32" r="29" fill="#fff"/><circle cx="32" cy="32" r="27" fill="url(#blueG)"/><g stroke="#fff" stroke-width="3.600" stroke-linecap="round" fill="none"><path d="M36 13L18 47M28 13l18 34M13 39h38"/></g></svg><b class="badge">1</b></div>
  <div class="dk"><svg width="64" height="64" viewBox="0 0 64 64"><circle cx="32" cy="32" r="29" fill="#eef2f4" stroke="#ddd"/><circle cx="32" cy="32" r="25" fill="url(#blueG)"/><path d="M47 16L27 28l10 9z" fill="#f23c3c"/><path d="M17 48l10-20 10 9z" fill="#fff"/></svg></div>
  <div class="dk dk-badge"><svg width="64" height="64" viewBox="0 0 64 64"><rect x="4" y="3" width="56" height="56" rx="4" fill="#70767a"/><circle cx="32" cy="31" r="24" fill="#26282a"/><circle cx="32" cy="31" r="20" fill="none" stroke="#b4b8ba" stroke-width="5" stroke-dasharray="5 3"/><circle cx="32" cy="31" r="8" fill="none" stroke="#c6c9cb" stroke-width="4"/><path d="M32 13v10M32 39v10M16 22l9 5M39 35l9 5M16 40l9-5M39 27l9-5" stroke="#c6c9cb" stroke-width="3.500"/></svg><b class="badge">1</b></div>
  <div class="dk"><svg width="64" height="64" viewBox="0 0 64 64"><circle cx="30" cy="30" r="28" fill="#5e6468"/><circle cx="30" cy="30" r="21" fill="#15324f"/><circle cx="30" cy="30" r="14" fill="#0b1a2b" stroke="#2f9ee0" stroke-width="7"/><path d="M37 38l16 20 8-2-16-24z" fill="#3a3d40"/></svg></div>
  <div class="dk"><svg width="64" height="64" viewBox="0 0 64 64"><g transform="rotate(-12 28 30)"><rect x="14" y="2" width="44" height="18" fill="#8d6a40"/><rect x="4" y="12" width="46" height="44" fill="#fff"/><rect x="8" y="16" width="38" height="36" fill="#6fa7d8"/><path d="M8 38c12-7 26-3 38 6v8H8z" fill="#d8dde0"/></g><circle cx="48" cy="44" r="13" fill="#7a7269"/><circle cx="48" cy="44" r="9" fill="#cfd7da"/><rect x="44" y="55" width="8" height="8" rx="2" fill="#6b5c4c"/></svg></div>
  <div class="dk on"><svg width="64" height="64" viewBox="0 0 64 64"><circle cx="32" cy="32" r="31" fill="#79b63f"/><path d="M14 25h9v18c0 5 7 5 10 3V25h9v31h-8v-3c-4 2-8 2-11 1v8h-9z" fill="#fff"/></svg></div>
  <div class="dk on"><svg width="64" height="64" viewBox="0 0 64 64"><rect x="5" y="5" width="54" height="54" rx="12" fill="#fff"/><use href="#gchrome" x="5" y="5" width="54" height="54"/></svg></div>
  <div class="dk on"><svg width="64" height="64" viewBox="0 0 64 64"><rect x="5" y="2" width="54" height="60" rx="13" fill="#fff"/><path d="M18 12c-6 6-7 22-3 34l7 6c5-5 8-14 7-24 2-6-2-9-5-9 1-3-2-7-6-7z" fill="#3c2a20"/><path d="M29 14c8 0 14 8 12 20l-9 10c-2-10-2-20-3-30z" fill="#5a3d2c"/><circle cx="45" cy="43" r="12" fill="#3fa5b5"/><text class="dk-ce" x="45" y="48" text-anchor="middle">CE</text></svg></div>
  <div class="dk on"><svg width="64" height="64" viewBox="0 0 64 64"><rect x="4" y="4" width="56" height="56" rx="14" fill="#20123a"/><circle cx="32" cy="33" r="22" fill="#ff7139"/><path d="M42 8c8 10 13 22 8 34-4 10-16 15-26 12 12 0 20-8 18-18-1-8-8-8-8-14 0-6 5-9 8-14z" fill="#ffbd4f"/><circle cx="32" cy="36" r="13" fill="#7542e5"/><path d="M20 24c8-6 18-4 22 4-6-3-14-1-14 4-4 0-7-3-8-8z" fill="#ff980e"/></svg></div>
  <div class="dk on"><svg width="64" height="64" viewBox="0 0 64 64" fill="none"><path d="M28 14c0-8 4-12 9-12s8 4 6 12" stroke="#999" stroke-width="2.500"/><path d="M40 14l6 46M44 12l12 42" stroke="#8b9094" stroke-width="4"/><path d="M30 30l2 32" stroke="#a0a4a8" stroke-width="4"/><circle cx="24" cy="30" r="15" fill="#f28b20" stroke="#d9d9d9" stroke-width="2"/><path d="M20 32v-5a4 4 0 0 1 8 0" stroke="#fff" stroke-width="2"/><rect x="18" y="32" width="12" height="8" fill="#fff"/></svg></div>
  <div class="dk on"><svg width="66" height="66" viewBox="0 0 66 66"><rect width="66" height="66" fill="#0b0b0b"/><use href="#gh" x="8" y="8" width="50" height="50"/></svg></div>
  <div class="dk on"><svg width="64" height="64" viewBox="0 0 64 64"><rect x="5" y="9" width="54" height="48" rx="3" fill="#111"/><rect x="7" y="12" width="50" height="42" fill="#333"/><path d="M10 18l6 4-6 4" fill="none" stroke="#fff" stroke-width="1.800"/><path d="M17 28h7" stroke="#fff" stroke-width="1.800"/></svg></div>
  <i class="dk-div"></i>
  <div class="dk dk-thumb"><svg width="66" height="64" viewBox="0 0 66 64"><rect x="4" y="8" width="60" height="38" fill="#fff" stroke="#ddd"/><rect x="4" y="8" width="60" height="4" fill="#d5dde0"/><path d="M20 40h30c6-2 6-10 8-18" stroke="#f3b08a" fill="none"/><path d="M10 16h8v20h-8z" fill="#eee"/><rect x="40" y="40" width="20" height="24" fill="#fff"/><path d="M44 62V52M48 62V44M52 62V47M56 62V51" stroke-width="3" stroke="#3dc865"/></svg></div>
  <div class="dk dk-thumb"><svg width="66" height="64" viewBox="0 0 66 64"><rect x="3" y="1" width="62" height="58" rx="2" fill="#111"/><rect x="5" y="5" width="58" height="50" fill="#fff"/><path d="M8 9h30M8 13h24M8 17h30M8 21h20" stroke="#aaa"/><rect x="5" y="32" width="58" height="3" fill="#8cc1e8"/><path d="M5 40h58M5 45h58M5 50h58" stroke="#ccc" stroke-width="3"/></svg></div>
  <div class="dk dk-thumb"><svg width="66" height="64" viewBox="0 0 66 64"><rect x="4" y="6" width="60" height="42" fill="#fff" stroke="#ddd"/><rect x="4" y="6" width="60" height="4" fill="#dedede"/><rect x="26" y="14" width="14" height="10" fill="#e7635a"/><path d="M10 32h5M22 32h5M34 32h5M46 32h5" stroke="#e39" stroke-width="4"/><rect x="42" y="36" width="20" height="26" rx="4" fill="#20123a"/><circle cx="52" cy="49" r="8" fill="#ff7139"/></svg></div>
  <div class="dk dk-thumb"><svg width="66" height="64" viewBox="0 0 66 64"><rect x="12" y="-4" width="32" height="66" fill="#fff" stroke="#ddd"/><path d="M16 8h24M16 12h24M16 16h24M16 20h24M16 24h24M16 36h24M16 40h20M16 44h24" stroke="#999"/><rect x="22" y="48" width="40" height="16" fill="#fff"/><use href="#gchrome" x="36" y="36" width="28" height="28"/></svg></div>
  <div class="dk dk-thumb"><svg width="66" height="64" viewBox="0 0 66 64"><rect x="2" y="8" width="62" height="48" fill="#fff" stroke="#ddd"/><rect x="2" y="8" width="62" height="4" fill="#d9d9d9"/><rect x="20" y="12" width="14" height="44" fill="#8e9bc2"/><rect x="34" y="12" width="14" height="44" fill="#a2b6d1"/><rect x="48" y="12" width="14" height="44" fill="#a8d7c1"/><rect x="42" y="44" width="20" height="20" rx="4" fill="#fff"/><circle cx="51" cy="54" r="6" fill="#3c2a20"/></svg></div>
  <div class="dk dk-thumb"><svg width="66" height="64" viewBox="0 0 66 64"><rect x="2" y="6" width="62" height="50" fill="#fff" stroke="#ddd"/><path d="M6 12h54M6 16h54M6 20h54M6 24h54M6 28h54M6 32h54M6 36h54M6 40h54M6 44h54" stroke="#aaa" stroke-dasharray="3 2"/><rect x="42" y="38" width="20" height="26" fill="#fff"/><path d="M46 62V52M50 62V42M54 62V46M58 62V50" stroke-width="3" stroke="#e8524c"/></svg></div>
  <div class="dk dk-thumb"><svg width="66" height="64" viewBox="0 0 66 64"><rect x="2" y="6" width="62" height="48" fill="#fff" stroke="#ddd"/><rect x="2" y="6" width="62" height="6" fill="#555"/><rect x="18" y="16" width="44" height="6" fill="#e89780"/><path d="M6 26h30M6 30h24M6 34h30M6 40h20" stroke="#aaa"/><circle cx="30" cy="46" r="3" fill="#48b"/><rect x="38" y="40" width="26" height="26" fill="#0b0b0b"/><use href="#gh" x="41" y="43" width="20" height="20"/></svg></div>
  <div class="dk dk-thumb"><svg width="64" height="66" viewBox="0 0 64 66"><path d="M10 10h44l-4 48c0 6-36 6-36 0z" fill="#e9ebea" stroke="#cfd1d1"/><ellipse cx="32" cy="10" rx="22" ry="5" fill="#7a7e80"/><path d="M20 11l3-9 3 9zM30 11l3-10 3 10zM40 11l3-8 3 8z" fill="#fff"/></svg></div>
</footer>
</body>
</html>
```

FILE: styles.css
```css
* { box-sizing: border-box; }
html, body { margin: 0; padding: 0; }
body {
  width: 2560px; height: 1600px; overflow: hidden;
  background: linear-gradient(90deg, #a9a9a3 0, #8a8a84 60px, #7f7f7a 1200px, #81817c 2480px, #a5a5a0 2560px);
  font-family: Roboto, "Liberation Sans", sans-serif;
  color: #2b2b2b;
}
.defs { position: absolute; }
i { display: block; font-style: normal; }
svg { flex: none; display: block; }

/* macOS menu bar */
.menubar {
  height: 44px; background: #cce2ea; display: flex; justify-content: space-between; align-items: center;
  color: #1a2f38; font-size: 28.400px; box-shadow: 0 1px 0 #2a4a56;
}
.mb-left { display: flex; align-items: center; gap: 37.600px; padding-left: 42px; }
.mb-apple { fill: #1a2f38; margin-right: 4px; }
.mb-app { font-weight: 700; font-size: 31px; }
.mb-right { display: flex; align-items: center; position: relative; }
.st-el { margin-right: 30px; }
.st-clock { margin-right: 41px; }
.st-bt { margin-right: 32px; }
.st-wifi { margin-right: 19px; }
.st-vol { margin-right: 19px; }
.st-pct { width: 78px; font-size: 26px; white-space: nowrap; }
.st-bat { margin-right: 31px; }
.st-flag { margin-right: 30px; }
.st-time { width: 158px; font-size: 30px; white-space: nowrap; }
.st-search { margin-right: 33px; margin-left: 0; }
.st-siri { margin-right: 23px; }
.st-list { margin-right: 48px; }

/* Browser window */
.window {
  margin-top: 1px; height: 1423px; background: #fff; border-radius: 12px 12px 10px 10px; overflow: hidden;
  display: flex; flex-direction: column;
}
.tabstrip { height: 85px; background: #e89780; display: flex; align-items: flex-end; position: relative; flex: none; }
.lights { width: 158px; height: 68px; display: flex; gap: 16px; padding: 15px 0 0 25px; flex: none; }
.lights i { width: 24px; height: 24px; border-radius: 50%; }
.l-r { background: #fe5f57; }
.l-y { background: #febb2e; }
.l-g { background: #28c840; }
.tab { width: 238.500px; height: 68px; display: flex; align-items: center; padding: 0 0 4px 20px; flex: none; position: relative; }
.tab-pre { width: 238.500px; }
.tab-active { width: 240.500px; background: #f5d2c8; border-radius: 16px 16px 0 0; }
.tab-active::before, .tab-active::after { content: ""; position: absolute; bottom: 0; width: 12px; height: 12px; }
.tab-active::before { left: -12px; background: radial-gradient(circle at 0 0, #e89780 11.500px, #f5d2c8 12px); }
.tab-active::after { right: -12px; background: radial-gradient(circle at 100% 0, #e89780 11.500px, #f5d2c8 12px); }
.fav { margin-right: 18px; }
.fav-gray { fill: #666; }
.t-title {
  width: 118px; font-size: 24.500px; white-space: nowrap; overflow: hidden; color: #2a2a2a;
  -webkit-mask-image: linear-gradient(90deg, #000 62%, transparent 98%); mask-image: linear-gradient(90deg, #000 62%, transparent 98%);
}
.t-ru { font-size: 23.400px; }
.t-x { margin-left: 12px; }
.t-sep { width: 1.500px; height: 40px; background: #a46c5b; flex: none; margin-bottom: 13px; }
.t-plus { margin: 0 0 20px 32px; }
.t-more { margin: 0 0 28px 136px; }

.chromebar { height: 86px; background: #f5d2c8; border-bottom: 2px solid #c9a99f; display: flex; align-items: center; flex: none; }
.cb-nav { margin-left: 28px; }
.cb-fwd { margin-left: 35px; }
.cb-rel { margin-left: 34px; }
.omnibox {
  width: 1933px; height: 68px; margin-left: 29px; border-radius: 34px; background: #fdf4f0;
  display: flex; align-items: center; padding-left: 27px;
}
.ob-lock { margin-right: 23px; }
.ob-url { font-size: 29.300px; color: #6a6765; width: 1642px; white-space: nowrap; }
.ob-url b { font-weight: 400; color: #222; }
.ob-ic { margin-right: 34px; }
.ob-g { font: 700 13px Roboto, sans-serif; fill: #fff; }
.cb-r1 { margin-left: 32px; }
.cb-r2 { margin-left: 33px; }
.cb-r3 { margin-left: 32px; }
.cb-r4 { margin-left: 34px; }
.avatar {
  width: 44px; height: 44px; margin-left: 28px; border-radius: 50%; background: #1a8bd2; color: #fff;
  display: flex; align-items: center; justify-content: center; font-size: 24px;
}
.cb-dots { margin-left: 39px; }

/* Tableau header */
.tb-head {
  height: 108px; background: #24283b; color: #f0f0f2; flex: none;
  display: grid; grid-template-columns: 838px auto 1fr; 
}
.tb-menu { display: flex; gap: 36px; padding: 0 0 18px 18px; align-items: flex-end; font-size: 24px; }
.tb-title { display: flex; align-items: center; padding-bottom: 2px; height: 108px; }
.draft { border: 1px solid #a9abb5; border-radius: 4px; height: 28px; width: 81px; display: flex; align-items: center; justify-content: center; font-size: 23px; color: #d9dbe0; margin-right: 15px; }
.wbname { font-size: 30.400px; font-weight: 500; color: #fff; }
.tb-right { display: flex; align-items: center; justify-content: flex-end; padding-right: 36px; height: 108px; }
.saved { font-size: 23.400px; margin-right: 30px; color: #eceef0; }
.publish { display: flex; height: 42px; margin-right: 28px; }
.pub-main { width: 213px; background: #1f6f9c; color: #fff; display: flex; align-items: center; justify-content: center; font-size: 22.500px; font-weight: 500; }
.pub-caret { width: 44px; margin-left: 2px; background: #1f6f9c; position: relative; }
.pub-caret::after { content: ""; position: absolute; left: 15px; top: 18px; border: 7px solid transparent; border-top: 8px solid #fff; border-bottom: 0; }
.tb-vsep { width: 1px; height: 60px; background: #3f4357; margin-right: 29px; }
.user { font-size: 23.500px; color: #e8e9ed; margin-right: 12px; }
.user-caret { border: 7px solid transparent; border-top: 8px solid #e8e9ed; border-bottom: 0; margin-right: 67px; }
.tb-close { margin-top: -4px; }

/* Tableau toolbar */
.tb-tools { height: 73px; background: #f4f4f4; border-bottom: 1px solid #c6c6c6; display: flex; align-items: center; flex: none; }
.ti-a { margin-left: 13px; }
.ti-b { margin-left: 29px; }
.ti-sep { width: 1px; height: 64px; background: #cfcfcf; }
.sep1 { margin-left: 25px; }
.ti-c { margin-left: 25px; }
.ti-d { margin-left: 29px; }
.ti-e { margin-left: 31px; }
.sep2 { margin-left: 24px; }
.ti-f { margin-left: 24px; }
.sep3 { margin-left: 23px; }
.ti-g { margin-left: 26px; }
.ti-h { margin-left: 26px; }
.ti-i { margin-left: 28px; }
.sep4 { margin-left: 26px; }
.ti-j { margin-left: 27px; }
.sep5 { margin-left: 24px; }
.ti-k { margin-left: 22px; }
.tools-right { margin-left: auto; display: flex; align-items: center; padding-right: 43px; }
.tr-sign { margin-right: 29px; }
.tr-show { margin-right: 20px; }
.showme { font-size: 23px; color: #b5b5b5; }

/* Workspace */
.workspace { height: 985px; display: flex; flex: none; }
.sidebar { width: 534px; flex: none; background: #f8f8f8; border-right: 2px solid #d6d6d6; display: flex; flex-direction: column; }
.sb-h { font-size: 27px; font-weight: 500; color: #2e2e2e; }
.sb-conn { height: 173px; padding: 30px 22px 0; border-bottom: 2px solid #dcdcdc; flex: none; }
.sb-hd { display: flex; justify-content: space-between; align-items: center; height: 32px; margin-bottom: 12px; padding-right: 10px; }
.conn-card { height: 75px; background: #e5e5e5; border-left: 5px solid #62a5c4; padding: 7px 0 0 14px; display: flex; flex-direction: column; }
.conn-name { font-size: 24.800px; white-space: nowrap; color: #2b2b2b; line-height: 34px; }
.conn-type { font-size: 18.500px; color: #666; padding: 1px 0 0 22px; line-height: 28px; }
.sb-db { height: 105px; padding: 20px 22px 0; border-bottom: 2px solid #dcdcdc; display: flex; flex-direction: column; flex: none; gap: 3px; }
.sb-val { font-size: 22.500px; color: #333; }
.sb-tables { padding: 21px 16px 0; }
.tbl-hd { display: flex; justify-content: space-between; align-items: center; padding-right: 21px; height: 32px; }
.tbl-list { list-style: none; margin: 0; padding: 3.500px 0 0; }
.tbl-list li, .tbl-act { display: flex; align-items: center; gap: 15px; padding-left: 13px; font-size: 24.900px; color: #333; white-space: nowrap; }
.tbl-list li { height: 41.700px; }
.tbl-act { height: 66.500px; gap: 11px; font-size: 24.600px; }
.tbl-list + .tbl-act { margin-top: 14px; }
.dis { color: #c2c2c2; }

.main { flex: 1; min-width: 0; display: flex; flex-direction: column; background: #fff; }
.ds-head { height: 115px; display: flex; flex: none; position: relative; align-items: flex-start; padding-left: 31px; }
.ds-cyl { color: #555; margin-top: 40px; }
.ds-caret { margin: 54px 0 0 9px; border: 4.500px solid transparent; border-top: 6px solid #666; border-bottom: 0; }
.ds-title { font-size: 45.900px; font-weight: 400; margin: 28px 0 0 30px; color: #2a2a2a; white-space: nowrap; width: 1258px; }
.ds-conn { font-size: 22.400px; width: 543px; flex: none; color: #2e2e2e; padding-top: 10px; }
.dc-l { height: 36px; line-height: 36px; white-space: nowrap; }
.dc-row { display: flex; align-items: center; height: 36px; margin: 5px 0 -5px; }
.radio { width: 25px; height: 25px; border: 1.400px solid #333; border-radius: 50%; position: relative; background: #fff; }
.radio.on::after { content: ""; position: absolute; inset: 6px; border-radius: 50%; background: #333; }
.dc-live { margin: 0 0 0 10px; width: 96px; }
.dc-ex { margin: 0 0 0 12px; width: 92px; }
.dc-sep { width: 2px; height: 24px; background: #c2cbcf; }
.lnk { color: #4b98b4; font-weight: 500; margin-left: 15px; width: 68px; }
.lnk-up { margin: -8px 0 0 16px; width: 90px; }
.ds-filt { font-size: 22.400px; color: #2e2e2e; padding-top: 24px; }
.df-l { height: 36px; line-height: 36px; }
.df-r { display: flex; gap: 29px; margin-top: 4px; line-height: 36px; }
.df-r b { font-weight: 500; }

.canvas { height: 435px; position: relative; overflow: hidden; flex: none; }
.links { position: absolute; left: 0; top: 0; }
.node {
  position: absolute; width: 363px; height: 64px; background: #fff; border: 2px solid #e2e2e2; border-radius: 2px;
  box-shadow: 0 2px 2px #cfcfcf; display: flex; align-items: center; padding: 0 0 0 15px; font-size: 23px; font-weight: 500; color: #2e2e2e;
}
.n-orders { left: 49px; top: 168px; }
.n-cal { left: 618px; top: -14px; }
.n-cust { left: 618px; top: 107px; }
.n-geo { left: 618px; top: 227px; background: #f4f4f4; border: 2px solid #333; box-shadow: none; }
.n-ship { left: 618px; top: 348px; }
.vscroll { position: absolute; right: 0; top: 0; bottom: 0; width: 16px; background: linear-gradient(#f7f7f7 0, #f7f7f7 51px, #ececec 51px, #ececec 380px, #f7f7f7 380px); }

.gridbar { height: 77px; flex: none; background: #f4f4f4; border-top: 2px solid #cfcfcf; border-bottom: 2px solid #cfcfcf; display: flex; align-items: center; justify-content: space-between; padding: 0 0 0 36px; }
.select { width: 360px; height: 41px; border: 1px solid #222; border-radius: 2px; display: flex; align-items: center; justify-content: space-between; padding: 0 10px 0 12px; font-size: 22.800px; font-weight: 500; color: #2e2e2e; }
.select i { border: 7px solid transparent; border-top: 10px solid #666; border-bottom: 0; }
.gb-right { display: flex; align-items: center; }
.rowsinput { width: 156px; height: 42px; border: 1px solid #222; border-radius: 1px; display: flex; align-items: center; justify-content: flex-end; padding-right: 12px; }
.rowslbl { font-size: 23px; margin-left: 12px; width: 85px; color: #2e2e2e; }
.gb-gear { margin-right: 34px; }
.gb-chev { margin-right: 28px; }

.lower { flex: 1; min-height: 0; display: flex; }
.meta { width: 810px; flex: none; padding: 0 36px 0 36px; position: relative; }
.meta-back { position: absolute; right: 31px; top: 28px; }
.m-label { font-size: 22.600px; font-weight: 500; color: #2e2e2e; line-height: 30px; padding-top: 79px; }
.m-name { height: 47px; border-bottom: 2px solid #d2d2d2; padding: 11px 0 0 12px; font-size: 22.700px; color: #444; margin-top: 2px; }
.m-fields { padding-top: 61px; }
.ft-wrap { margin-top: 9px; }
.ftable { display: flex; height: 66px; width: 722px; border-top: 2px solid #e4e4e4; border-bottom: 2px solid #d8d8d8; border-left: 5px solid #e2e2e2; }
.fcol { height: 100%; display: flex; align-items: center; border-right: 1px solid #e4e4e4; font-size: 22.500px; font-weight: 500; padding-left: 22px; color: #2e2e2e; white-space: nowrap; }
.f1 { width: 105px; }
.f2 { width: 310px; }
.f3 { width: 186px; }
.f4 { width: 116px; }
.frow { display: flex; height: 8px; background: #f4f4f4; }
.frow i { height: 8px; border-right: 1px solid #e4e4e4; }
.fr-mark { width: 5px; background: #62a5c4; border: 0 !important; }
.fr1 { width: 105px; }
.fr2 { width: 310px; }
.fr3 { width: 186px; }
.fr4 { width: 116px; }
.fr-bar { width: 16px; background: #e0e0e0; border: 0 !important; }

.preview { flex: 1; min-width: 0; position: relative; overflow: hidden; border-left: 2px solid #d6d6d6; background: #fff; }
.cols { display: flex; height: 147px; border-top: 5px solid #62a5c4; border-bottom: 2px solid #dcdcdc; }
.col { flex: none; border-right: 1px solid #e4e4e4; padding: 0 0 0 21px; display: flex; flex-direction: column; white-space: nowrap; }
.c1 { width: 157.500px; }
.c2 { width: 286px; }
.c3 { width: 245px; }
.c4 { width: 259px; }
.c5 { width: 300px; border: 0; }
.cic { height: 26px; margin: 23px 0 0 12px; }
.cabc { font-size: 17px; color: #4f96b0; line-height: 26px; }
.csrc { font-size: 18.500px; color: #555; margin-top: 9px; line-height: 26px; }
.cname { font-size: 23.100px; font-weight: 500; color: #2e2e2e; margin-top: 11px; line-height: 32px; }
.upd { padding: 105px 0 0 486px; }
.btn { width: 359px; height: 43px; border: 1.500px solid #666; border-radius: 2px; display: flex; align-items: center; justify-content: center; font-size: 23px; font-weight: 500; color: #666; }
.btn2 { margin-top: 22px; height: 60px; align-items: flex-start; padding-top: 8px; }
.hscroll { position: absolute; left: 0; bottom: 0; height: 21px; width: 100%; background: linear-gradient(90deg, rgba(205,205,205,.6) 1160px, #f5f5f5 1160px); }

/* Sheet bar */
.sheetbar { height: 54px; flex: none; background: #e4e4e4; border-top: 2px solid #d2d2d2; border-bottom: 2px solid #d2d2d2; display: flex; }
.st-ds { width: 227px; background: #fbfbfb; border-right: 1px solid #d2d2d2; display: flex; gap: 10px; padding: 9px 0 0 19px; font-size: 23px; color: #555; }
.st-ds svg { color: #444; }
.st-ds span { line-height: 28px; }
.st-sheet { width: 101px; border-right: 1px solid #d2d2d2; padding: 9px 0 0 13px; font-size: 23px; color: #555; line-height: 28px; white-space: nowrap; }
.st-add { border-right: 1px solid #d2d2d2; padding: 13px 0 0 16px; }
.a1 { width: 58px; }
.a2 { width: 56px; }
.a3 { width: 58px; }
.winfoot { flex: 1; background: linear-gradient(#e4e4e4, #f4f4f4); }

/* Dock */
.dock {
  margin: 44px 0 0 52px; width: 2455px; height: 100px; background: #d2d0ca; border-radius: 10px 10px 0 0;
  display: flex; padding: 8px 0 0 5px; align-items: flex-start;
}
.dk { width: 71px; height: 72px; flex: none; display: flex; justify-content: center; position: relative; }
.dk.on::after { content: ""; position: absolute; left: 32px; top: 69px; width: 7px; height: 7px; border-radius: 50%; background: #4d4a46; }
.dk-div { width: 1px; height: 64px; background: #a5a39e; margin: 4px 14px 0 17px; flex: none; }
.dk-thumb { width: 71px; }
.badge { position: absolute; right: -3px; top: -2px; width: 26px; height: 26px; border-radius: 50%; background: #f23a3c; color: #fff; font: 400 17px/26px Roboto, sans-serif; text-align: center; }
.dk-mon { font: 400 10px Roboto, sans-serif; fill: #fff; }
.dk-day { font: 300 30px Roboto, sans-serif; fill: #111; }
.dk-3d { font: 400 11px Roboto, sans-serif; fill: #555; }
.dk-ce { font: 500 14px Roboto, sans-serif; fill: #fff; }
```
